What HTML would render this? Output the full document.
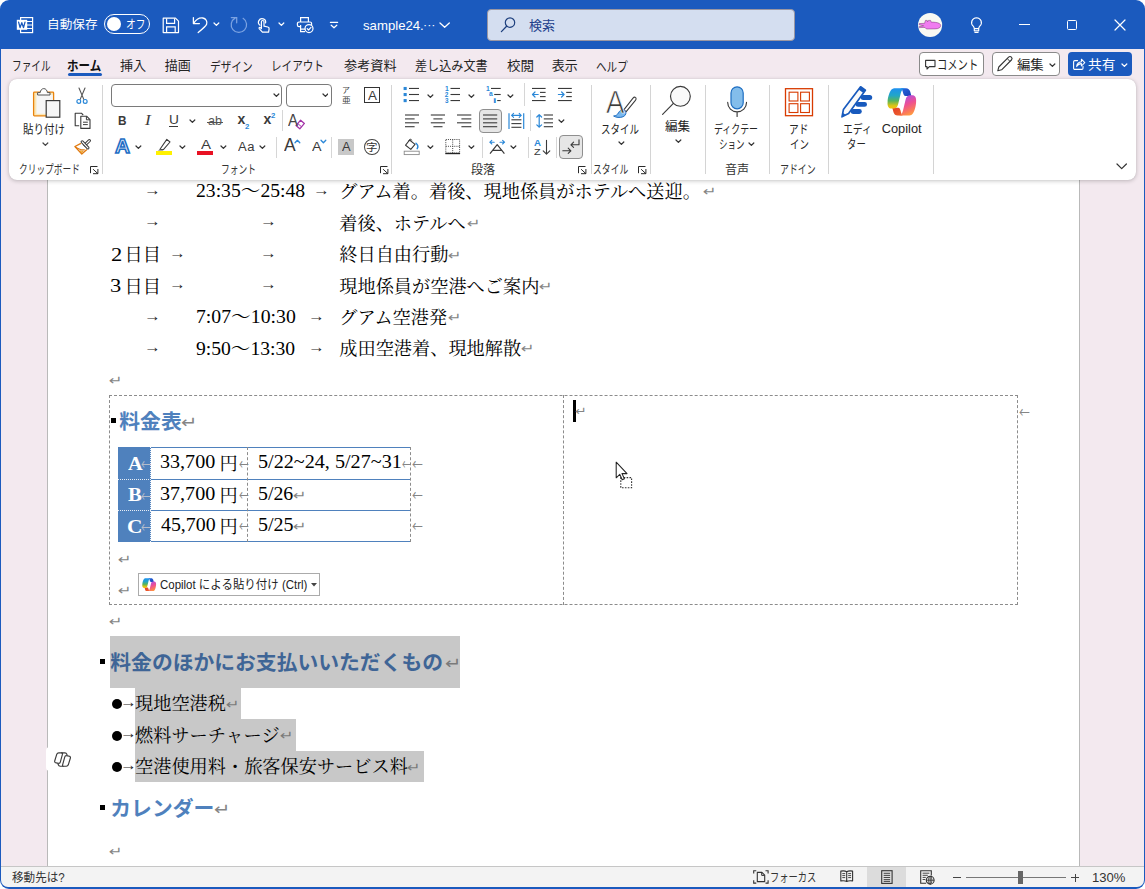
<!DOCTYPE html><html lang="ja"><head><meta charset="utf-8"><title>sample24 - Word</title><style>

html,body{margin:0;padding:0;background:#fff;}
body{width:1145px;height:889px;overflow:hidden;position:relative;font-family:"Liberation Sans","Noto Sans CJK JP",sans-serif;}
#app div,#app svg,#app span.t{position:absolute;}
#app{position:absolute;left:0;top:0;width:1145px;height:889px;overflow:hidden;}
span.t{white-space:pre;transform-origin:0 50%;display:block;}
b.bl{display:inline-block;width:0;height:0;vertical-align:baseline;}

</style></head><body><div id="app">
<div style="left:0px;top:0px;width:1145px;height:889px;background:#1B5ABE;border-radius:9px 9px 9px 9px;"></div>
<div style="left:1px;top:48.5px;width:1143px;height:818.5px;background:#F3E9EF;"></div>
<div style="left:47px;top:170px;width:1033px;height:697px;background:#fff;border-left:1px solid #b9b9b9;border-right:1px solid #b9b9b9;box-sizing:border-box;"></div>
<div style="left:1px;top:866px;width:1143px;height:21px;background:#F3F3F3;border-top:1px solid #C6C6C6;box-sizing:border-box;border-radius:0 0 7px 7px;"></div>
<div style="left:9px;top:79px;width:1127px;height:101px;background:#fff;border-radius:8px;box-shadow:0 1px 4px rgba(0,0,0,0.22),0 0 1px rgba(0,0,0,0.15);"></div>
<div style="left:103.9px;top:13.7px;width:46.2px;height:20.5px;border:1.3px solid #fff;border-radius:10.3px;box-sizing:border-box;"></div>
<div style="left:107px;top:17px;width:14px;height:14px;background:#fff;border-radius:50%;"></div>
<div style="left:487px;top:9px;width:308px;height:31.8px;background:#D4DEF0;border-radius:4px;border:1px solid #9a97a3;box-sizing:border-box;"></div>
<div style="left:68px;top:73px;width:33.5px;height:3px;background:#1B5ABE;border-radius:1.5px;"></div>
<div style="left:919px;top:52px;width:64.5px;height:23.5px;background:#fff;border:1px solid #8a8a8a;border-radius:4px;box-sizing:border-box;"></div>
<div style="left:992px;top:52px;width:68px;height:23.5px;background:#fff;border:1px solid #8a8a8a;border-radius:4px;box-sizing:border-box;"></div>
<div style="left:1068px;top:52px;width:64px;height:23.5px;background:#1B5ABE;border-radius:4px;"></div>
<div style="left:101.5px;top:84.5px;width:1px;height:89px;background:#d4d4d4;"></div>
<div style="left:391px;top:84.5px;width:1px;height:89px;background:#d4d4d4;"></div>
<div style="left:590.8px;top:84.5px;width:1px;height:89px;background:#d4d4d4;"></div>
<div style="left:649.7px;top:84.5px;width:1px;height:89px;background:#d4d4d4;"></div>
<div style="left:704.7px;top:84.5px;width:1px;height:89px;background:#d4d4d4;"></div>
<div style="left:769.4px;top:84.5px;width:1px;height:89px;background:#d4d4d4;"></div>
<div style="left:827.5px;top:84.5px;width:1px;height:89px;background:#d4d4d4;"></div>
<div style="left:932.7px;top:84.5px;width:1px;height:89px;background:#d4d4d4;"></div>
<div style="left:281.5px;top:110px;width:1px;height:21px;background:#d6d6d6;"></div>
<div style="left:276px;top:137px;width:1px;height:21px;background:#d6d6d6;"></div>
<div style="left:331px;top:137px;width:1px;height:21px;background:#d6d6d6;"></div>
<div style="left:524.4px;top:83px;width:1px;height:23px;background:#d6d6d6;"></div>
<div style="left:530px;top:110px;width:1px;height:21px;background:#d6d6d6;"></div>
<div style="left:482px;top:137px;width:1px;height:21px;background:#d6d6d6;"></div>
<div style="left:527.5px;top:137px;width:1px;height:21px;background:#d6d6d6;"></div>
<div style="left:556px;top:137px;width:1px;height:21px;background:#d6d6d6;"></div>
<div style="left:110.5px;top:83.5px;width:171.5px;height:23px;background:#fff;border:1px solid #7a7a7a;border-radius:4px;box-sizing:border-box;"></div>
<div style="left:285.5px;top:83.5px;width:46px;height:23px;background:#fff;border:1px solid #7a7a7a;border-radius:4px;box-sizing:border-box;"></div>
<div style="left:478.5px;top:109px;width:23px;height:23.5px;background:#e6e6e6;border:1px solid #8f8f8f;border-radius:4px;box-sizing:border-box;"></div>
<div style="left:558.7px;top:135px;width:24px;height:24px;background:#e6e6e6;border:1px solid #8f8f8f;border-radius:4px;box-sizing:border-box;"></div>
<div style="left:867px;top:867px;width:38.5px;height:20px;background:#dcdcdc;"></div>
<div style="left:966px;top:877px;width:99.5px;height:1px;background:#777;"></div>
<div style="left:1018px;top:870.5px;width:5px;height:13px;background:#666;"></div>
<div style="left:953px;top:877px;width:8px;height:1px;background:#444;"></div>
<div style="left:1071px;top:877px;width:8px;height:1px;background:#444;"></div>
<div style="left:1074.5px;top:873.5px;width:1px;height:8px;background:#444;"></div>
<div style="left:109px;top:395px;width:909px;height:210px;border:1px dashed #8c8c8c;box-sizing:border-box;"></div>
<div style="left:563px;top:395px;width:1px;height:210px;border-left:1px dashed #8c8c8c;"></div>
<div style="left:111px;top:418px;width:5px;height:5px;background:#000;"></div>
<div style="left:118px;top:447px;width:33px;height:94.5px;background:#4F81BD;"></div>
<div style="left:118px;top:447px;width:293px;height:1px;background:#4F81BD;"></div>
<div style="left:118px;top:479px;width:293px;height:1px;background:#4F81BD;"></div>
<div style="left:118px;top:510.3px;width:293px;height:1px;background:#4F81BD;"></div>
<div style="left:118px;top:541px;width:293px;height:1px;background:#4F81BD;"></div>
<div style="left:247px;top:447px;width:1px;height:95px;border-left:1px dashed #8c8c8c;"></div>
<div style="left:410px;top:447px;width:1px;height:95px;border-left:1px dashed #8c8c8c;"></div>
<div style="left:150px;top:447px;width:1px;height:95px;border-left:1px dotted #e8eef6;"></div>
<div style="left:118px;top:479px;width:33px;height:1px;border-top:1px dotted #e8eef6;"></div>
<div style="left:118px;top:510.3px;width:33px;height:1px;border-top:1px dotted #e8eef6;"></div>
<div style="left:138px;top:573px;width:182px;height:23px;background:#fff;border:1px solid #ababab;box-sizing:border-box;"></div>
<svg style="left:311px;top:583px;" width="6" height="4" viewBox="0 0 6 4" fill="none"><path d="M0 0h6l-3 3.5z" fill="#444"/></svg>
<div style="left:573px;top:400px;width:3px;height:22px;background:#000;"></div>
<div style="left:110px;top:636px;width:350px;height:51.7px;background:#C8C8C8;"></div>
<div style="left:135px;top:687.7px;width:105.7px;height:31.3px;background:#C8C8C8;"></div>
<div style="left:135px;top:719px;width:161px;height:32px;background:#C8C8C8;"></div>
<div style="left:135px;top:751px;width:289px;height:30.7px;background:#C8C8C8;"></div>
<div style="left:100px;top:659px;width:5px;height:5px;background:#000;"></div>
<div style="left:112px;top:699.3px;width:10px;height:10px;background:#000;border-radius:50%;"></div>
<div style="left:112px;top:730.8px;width:10px;height:10px;background:#000;border-radius:50%;"></div>
<div style="left:112px;top:762.3px;width:10px;height:10px;background:#000;border-radius:50%;"></div>
<div style="left:100px;top:805px;width:5px;height:5px;background:#000;"></div>
<div style="left:45.8px;top:746.5px;width:30px;height:24.8px;background:#fff;border-radius:4px;"></div>
<svg style="left:16px;top:16px;" width="18" height="18" viewBox="0 0 18 18" fill="none"><rect x="4.6" y="1.6" width="12" height="15" stroke="#fff" stroke-width="1.2"/>
<path d="M11 5.5h5.5M11 9h5.5M11 12.5h5.5" stroke="#fff" stroke-width="1.1"/>
<rect x="0.8" y="3.8" width="10.4" height="10" fill="#fff"/>
<path d="M2.6 6.2l1.5 5.4 1.7-5 1.7 5 1.5-5.4" stroke="#1B5ABE" stroke-width="1.3" stroke-linejoin="round" stroke-linecap="round"/></svg>
<svg style="left:162px;top:17px;" width="18" height="17" viewBox="0 0 18 17" fill="none"><path d="M1.2 1.2h12.3l3 3v11.4H1.2z" stroke="#fff" stroke-width="1.2" stroke-linejoin="round"/>
<path d="M4.6 1.4v5h8v-5" stroke="#fff" stroke-width="1.2"/>
<path d="M4.6 15.4v-5.6h8.6v5.6" stroke="#fff" stroke-width="1.2"/></svg>
<svg style="left:192px;top:16px;" width="17" height="18" viewBox="0 0 17 18" fill="none"><path d="M1.4 1.6v6h6" stroke="#fff" stroke-width="1.3" stroke-linecap="round" stroke-linejoin="round"/>
<path d="M1.8 7.2C4 3.6 7.6 1.6 10.8 2c3.2.5 4.7 3.4 3.8 6.2-.6 1.8-2 3-8.4 8.3" stroke="#fff" stroke-width="1.3" stroke-linecap="round"/></svg>
<svg style="left:213.1px;top:22.400000000000002px;" width="6.8" height="4.4" viewBox="0 0 6.8 4.4" fill="none"><path d="M1 1 L3.4 3.4 L5.8 1" stroke="#fff" stroke-width="1.25" stroke-linecap="round" stroke-linejoin="round"/></svg>
<svg style="left:230px;top:16px;" width="18" height="18" viewBox="0 0 18 18" fill="none"><path d="M13.100 2.300A7.700 7.700 0 1 1 5 2.100" stroke="#7CA3E2" stroke-width="1.250" stroke-linecap="round"/>
<path d="M1.300 1.550H6.700V6.800" stroke="#7CA3E2" stroke-width="1.250" stroke-linecap="round" stroke-linejoin="miter"/></svg>
<svg style="left:256px;top:17px;" width="15" height="17" viewBox="0 0 15 17" fill="none"><path d="M4 8.2A3.6 3.6 0 1 1 9.6 6" stroke="#fff" stroke-width="1.2" stroke-linecap="round"/>
<path d="M5.4 11.6V4.8a1.3 1.3 0 0 1 2.6 0v4.4l3.8.8c.9.2 1.4.9 1.3 1.8l-.5 3.4H6.4L3.2 11.600c-.5-.8.6-1.600 1.300-.8z" stroke="#fff" stroke-width="1.2" stroke-linejoin="round"/></svg>
<svg style="left:278.0px;top:22.400000000000002px;" width="6.8" height="4.4" viewBox="0 0 6.8 4.4" fill="none"><path d="M1 1 L3.4 3.4 L5.8 1" stroke="#fff" stroke-width="1.25" stroke-linecap="round" stroke-linejoin="round"/></svg>
<svg style="left:296px;top:16px;" width="19" height="18" viewBox="0 0 19 18" fill="none"><path d="M4.6 6V1.600h7.800V6" stroke="#fff" stroke-width="1.2"/>
<path d="M9 13.2H4.600M4.6 10.600H3.000a1.6 1.600 0 0 1-1.600-1.600V7.600a1.6 1.600 0 0 1 1.600-1.600h11a1.600 1.600 0 0 1 1.600 1.600v1" stroke="#fff" stroke-width="1.2" stroke-linecap="round"/>
<path d="M4.6 9.000v6.600h4.4" stroke="#fff" stroke-width="1.2"/>
<circle cx="13" cy="12.600" r="4" stroke="#fff" stroke-width="1.2"/>
<path d="M11.2 12.600l1.400 1.400 2.400-2.600" stroke="#fff" stroke-width="1.200" stroke-linecap="round" stroke-linejoin="round"/></svg>
<svg style="left:329px;top:20px;" width="10" height="10" viewBox="0 0 10 10" fill="none"><path d="M1.400 2.400h7.200" stroke="#fff" stroke-width="1.2" stroke-linecap="round"/>
<path d="M2.200 5.200L5 7.800 7.800 5.200" stroke="#fff" stroke-width="1.2" stroke-linecap="round" stroke-linejoin="round"/></svg>
<svg style="left:438.85px;top:22.35px;" width="11.3" height="6.3" viewBox="0 0 11.3 6.3" fill="none"><path d="M1 1 L5.65 5.3 L10.3 1" stroke="#fff" stroke-width="1.3" stroke-linecap="round" stroke-linejoin="round"/></svg>
<svg style="left:500px;top:16px;" width="17" height="17" viewBox="0 0 17 17" fill="none"><circle cx="10" cy="6.600" r="4.700" stroke="#1d3f7d" stroke-width="1.2"/><path d="M6.600 10.200L1.400 15.600" stroke="#1d3f7d" stroke-width="1.300" stroke-linecap="round"/></svg>
<svg style="left:917px;top:12px;" width="26" height="26" viewBox="0 0 26 26" fill="none"><circle cx="13.100" cy="12.950" r="12.050" fill="#F8F9F3"/>
<path d="M2.200 11.600L7.600 11.300 8.400 8.400h1.800l.4 1.400.8-1.400h2.200l.6 1.700c2.800 0 6.300.300 8.200 1.400 1.600 1 1.600 3.200.2 4.200-1.200.900-3 1.200-4.600 1.200L9.400 17 8 15.400l-5.600.200-.2-1 4.400-.800-4.400-1z" fill="#F07CF0" stroke="#6a2a66" stroke-width="0.450" stroke-linejoin="round"/></svg>
<svg style="left:969px;top:16px;" width="15" height="18" viewBox="0 0 15 18" fill="none"><path d="M7.500 1.700a4.900 4.900 0 0 0-3.300 8.500c.7.700 1 1.400 1.100 2.400h4.400c.1-1 .4-1.700 1.100-2.400A4.900 4.900 0 0 0 7.500 1.700zM5.300 12.600v2.200h4.400v-2.200" stroke="#fff" stroke-width="1.150" stroke-linejoin="round"/>
<path d="M5.900 16.500h3.200" stroke="#fff" stroke-width="1.150" stroke-linecap="round"/></svg>
<div style="left:1019px;top:24px;width:10.5px;height:1.2px;background:#fff;"></div>
<div style="left:1067px;top:20px;width:10px;height:10px;border:1.2px solid #fff;box-sizing:border-box;border-radius:1.5px;"></div>
<svg style="left:1114px;top:19px;" width="12" height="12" viewBox="0 0 12 12" fill="none"><path d="M1 1l10 10M11 1L1 11" stroke="#fff" stroke-width="1.200" stroke-linecap="round"/></svg>
<svg style="left:924px;top:58.5px;" width="13" height="12" viewBox="0 0 13 12" fill="none"><path d="M1.6 1.4h9.400v6.200H5.400L3.000 10V7.600H1.600z" stroke="#333" stroke-width="1.1" stroke-linejoin="round"/></svg>
<svg style="left:996px;top:55px;" width="18" height="18" viewBox="0 0 18 18" fill="none"><path d="M12.600 2.200a1.900 1.900 0 0 1 2.800 2.800L5.600 14.800l-3.800 1 1-3.800z" stroke="#333" stroke-width="1.1" stroke-linejoin="round"/><path d="M11.200 3.600l2.800 2.800" stroke="#333" stroke-width="1"/></svg>
<svg style="left:1049.1px;top:62.599999999999994px;" width="6.8" height="4.4" viewBox="0 0 6.8 4.4" fill="none"><path d="M1 1 L3.4 3.4 L5.8 1" stroke="#333" stroke-width="1.25" stroke-linecap="round" stroke-linejoin="round"/></svg>
<svg style="left:1072px;top:57px;" width="14" height="14" viewBox="0 0 14 14" fill="none"><path d="M5.600 3.600H2.800a1.200 1.200 0 0 0-1.200 1.200v6.400a1.200 1.200 0 0 0 1.200 1.200h7a1.200 1.200 0 0 0 1.200-1.200V9.400" stroke="#fff" stroke-width="1.1" stroke-linecap="round"/><path d="M4.600 9.600c.4-3 2.200-4.600 4.800-4.800V2.200l3.400 3.400-3.400 3.400V6.600c-2 0-3.600.800-4.800 3z" stroke="#fff" stroke-width="1.050" stroke-linejoin="round"/></svg>
<svg style="left:1121.1px;top:62.599999999999994px;" width="6.8" height="4.4" viewBox="0 0 6.8 4.4" fill="none"><path d="M1 1 L3.4 3.4 L5.8 1" stroke="#fff" stroke-width="1.25" stroke-linecap="round" stroke-linejoin="round"/></svg>
<svg style="left:32px;top:87px;" width="30" height="32" viewBox="0 0 30 32" fill="none"><rect x="1.600" y="5.200" width="20" height="23.600" rx="0.800" fill="#FBE6B4" stroke="#E8820C" stroke-width="1.300"/>
<rect x="4.400" y="7.600" width="16.400" height="19.200" fill="#F6F6F6"/>
<path d="M5.600 8V5.600h2.600c.2-2.200 1.600-4 3.600-4s3.400 1.800 3.600 4h2.600V8z" fill="#fff" stroke="#555" stroke-width="1"/>
<rect x="14.200" y="13.600" width="13.600" height="16.600" fill="#F6F6F6" stroke="#3a3a3a" stroke-width="1.200"/></svg>
<svg style="left:42.1px;top:142.20000000000002px;" width="6.8" height="4.4" viewBox="0 0 6.8 4.4" fill="none"><path d="M1 1 L3.4 3.4 L5.8 1" stroke="#444" stroke-width="1.25" stroke-linecap="round" stroke-linejoin="round"/></svg>
<svg style="left:76px;top:86.5px;" width="12" height="17.5" viewBox="0 0 12 17.5" fill="none"><path d="M3.000 1l4.800 11.400M9.000 1L4.200 12.400" stroke="#555" stroke-width="1.100" stroke-linecap="round"/>
<circle cx="2.800" cy="14.400" r="1.900" stroke="#2B88D8" stroke-width="1.200"/><circle cx="9.200" cy="14.400" r="1.900" stroke="#2B88D8" stroke-width="1.200"/></svg>
<svg style="left:73.5px;top:112px;" width="17.5" height="17.5" viewBox="0 0 17.5 17.5" fill="none"><path d="M5.200 13.800H1.200V1.200h6.200l1.800 1.800" stroke="#3a3a3a" stroke-width="1.100" stroke-linejoin="round"/>
<path d="M6.800 4.200h5.800l3.400 3.400v8.800H6.800z" fill="#fff" stroke="#3a3a3a" stroke-width="1.100" stroke-linejoin="round"/>
<path d="M12.400 4.400v3.400h3.400M9.000 10.200h4.800M9.000 12.600h4.800" stroke="#3a3a3a" stroke-width="1"/></svg>
<svg style="left:73.5px;top:137.5px;" width="17.5" height="17.5" viewBox="0 0 17.5 17.5" fill="none"><path d="M6.900 5.400L.900 8.500l6.900 7.600 5.100-4.500" fill="#fff" stroke="#E07A10" stroke-width="1.300" stroke-linejoin="round"/>
<path d="M1.200 8.600c2.600 2.400 6 3.400 9.600 3.200" stroke="#E07A10" stroke-width="1.100"/>
<path d="M5.800 12.700l3.400.300-1.700 2z" fill="#F8D34A" stroke="#E07A10" stroke-width="0.600"/>
<path d="M11 6.900L15.300 2.700" stroke="#3a3a3a" stroke-width="3.200" stroke-linecap="round"/><path d="M11 6.900L15.300 2.700" stroke="#fff" stroke-width="1.200" stroke-linecap="round"/>
<path d="M8.200 3.900l5.700 6" stroke="#3a3a3a" stroke-width="3.200" stroke-linecap="round"/><path d="M8.200 3.900l5.700 6" stroke="#fff" stroke-width="1.200" stroke-linecap="round"/></svg>
<svg style="left:89.7px;top:165.8px;" width="9" height="9" viewBox="0 0 9 9" fill="none"><path d="M0.500 6.800V0.500H7.100M3.400 3.500L7.700 7.500M7.900 3.400V7.700H3.400" stroke="#2a2a2a" stroke-width="1" stroke-linecap="round" stroke-linejoin="round"/></svg>
<svg style="left:379.7px;top:165.8px;" width="9" height="9" viewBox="0 0 9 9" fill="none"><path d="M0.500 6.800V0.500H7.100M3.400 3.500L7.700 7.500M7.900 3.400V7.700H3.400" stroke="#2a2a2a" stroke-width="1" stroke-linecap="round" stroke-linejoin="round"/></svg>
<svg style="left:578.4px;top:165.8px;" width="9" height="9" viewBox="0 0 9 9" fill="none"><path d="M0.500 6.800V0.500H7.100M3.400 3.500L7.700 7.500M7.900 3.400V7.700H3.400" stroke="#2a2a2a" stroke-width="1" stroke-linecap="round" stroke-linejoin="round"/></svg>
<svg style="left:637.8px;top:165.8px;" width="9" height="9" viewBox="0 0 9 9" fill="none"><path d="M0.500 6.800V0.500H7.100M3.400 3.500L7.700 7.500M7.900 3.400V7.700H3.400" stroke="#2a2a2a" stroke-width="1" stroke-linecap="round" stroke-linejoin="round"/></svg>
<svg style="left:273.1px;top:93.3px;" width="6.8" height="4.4" viewBox="0 0 6.8 4.4" fill="none"><path d="M1 1 L3.4 3.4 L5.8 1" stroke="#333" stroke-width="1.25" stroke-linecap="round" stroke-linejoin="round"/></svg>
<svg style="left:321.6px;top:93.3px;" width="6.8" height="4.4" viewBox="0 0 6.8 4.4" fill="none"><path d="M1 1 L3.4 3.4 L5.8 1" stroke="#333" stroke-width="1.25" stroke-linecap="round" stroke-linejoin="round"/></svg>
<div style="left:364px;top:87.2px;width:16px;height:15.6px;border:1.1px solid #333;box-sizing:border-box;"></div>
<div style="left:169px;top:125.6px;width:9px;height:1.1px;background:#3a3a3a;"></div>
<svg style="left:189.0px;top:119.39999999999999px;" width="6.8" height="4.4" viewBox="0 0 6.8 4.4" fill="none"><path d="M1 1 L3.4 3.4 L5.8 1" stroke="#333" stroke-width="1.25" stroke-linecap="round" stroke-linejoin="round"/></svg>
<div style="left:207px;top:121.7px;width:16px;height:1px;background:#555;"></div>
<svg style="left:293.5px;top:118.5px;" width="12" height="12" viewBox="0 0 12 12" fill="none"><path d="M6.600 1.200l3.800 3.200-4.600 5.400-3.800-3.200z" fill="#fff" stroke="#A333A8" stroke-width="1.300" stroke-linejoin="round"/><path d="M3.800 4.600l3.800 3.200" stroke="#A333A8" stroke-width="1"/></svg>
<svg style="left:135.29999999999998px;top:145.0px;" width="6.8" height="4.4" viewBox="0 0 6.8 4.4" fill="none"><path d="M1 1 L3.4 3.4 L5.8 1" stroke="#333" stroke-width="1.25" stroke-linecap="round" stroke-linejoin="round"/></svg>
<svg style="left:156px;top:138px;" width="17" height="18" viewBox="0 0 17 18" fill="none"><rect x="0" y="13" width="16" height="4" fill="#FFF100"/>
<path d="M10.800 1.400l3.200 2.600-6.600 7.600-3.400-.4z" stroke="#3a3a3a" stroke-width="1.050" stroke-linejoin="round" fill="#fff"/>
<path d="M4.200 11.200l-2.400 1.300 5 .100.800-1.200z" fill="#555"/></svg>
<svg style="left:179.4px;top:145.0px;" width="6.8" height="4.4" viewBox="0 0 6.8 4.4" fill="none"><path d="M1 1 L3.4 3.4 L5.8 1" stroke="#333" stroke-width="1.25" stroke-linecap="round" stroke-linejoin="round"/></svg>
<div style="left:197px;top:151px;width:16px;height:4px;background:#E81123;"></div>
<svg style="left:219.79999999999998px;top:145.0px;" width="6.8" height="4.4" viewBox="0 0 6.8 4.4" fill="none"><path d="M1 1 L3.4 3.4 L5.8 1" stroke="#333" stroke-width="1.25" stroke-linecap="round" stroke-linejoin="round"/></svg>
<svg style="left:258.8px;top:145.4px;" width="6.8" height="4.4" viewBox="0 0 6.8 4.4" fill="none"><path d="M1 1 L3.4 3.4 L5.8 1" stroke="#333" stroke-width="1.25" stroke-linecap="round" stroke-linejoin="round"/></svg>
<svg style="left:293.5px;top:139.4px;" width="7" height="5" viewBox="0 0 7 5" fill="none"><path d="M1 3.800L3.400 1.200 5.800 3.800" stroke="#2B88D8" stroke-width="1.300" stroke-linecap="round" stroke-linejoin="round"/></svg>
<svg style="left:319.5px;top:139.4px;" width="7" height="5" viewBox="0 0 7 5" fill="none"><path d="M1 1.200L3.400 3.800 5.800 1.200" stroke="#2B88D8" stroke-width="1.300" stroke-linecap="round" stroke-linejoin="round"/></svg>
<div style="left:338px;top:138.8px;width:16px;height:16.3px;background:#C8C8C8;"></div>
<div style="left:364px;top:138.8px;width:16px;height:16.3px;border:1.100px solid #444;border-radius:50%;box-sizing:border-box;"></div>
<svg style="left:395px;top:80px;" width="200" height="80" viewBox="0 0 200 80" fill="none"><rect x="8.60" y="6.95" width="3.100" height="3.100" fill="#2B88D8"/><path d="M14.00 8.45H24.00" stroke="#3a3a3a" stroke-width="1.1"/><rect x="8.60" y="13.00" width="3.100" height="3.100" fill="#2B88D8"/><path d="M14.00 14.50H24.00" stroke="#3a3a3a" stroke-width="1.1"/><rect x="8.60" y="19.05" width="3.100" height="3.100" fill="#2B88D8"/><path d="M14.00 20.55H24.00" stroke="#3a3a3a" stroke-width="1.1"/><path d="M55.50 8.45H65.00" stroke="#3a3a3a" stroke-width="1.1"/><path d="M55.50 14.50H65.00" stroke="#3a3a3a" stroke-width="1.1"/><path d="M55.50 20.55H65.00" stroke="#3a3a3a" stroke-width="1.1"/><path d="M96.00 8.45H105.70" stroke="#3a3a3a" stroke-width="1.1"/><path d="M99.20 14.50H105.70" stroke="#3a3a3a" stroke-width="1.1"/><path d="M102.20 20.55H105.70" stroke="#3a3a3a" stroke-width="1.1"/><path d="M137.00 8.45H150.60" stroke="#3a3a3a" stroke-width="1.1"/><path d="M145.00 12.40H150.60" stroke="#3a3a3a" stroke-width="1.1"/><path d="M145.00 16.60H150.60" stroke="#3a3a3a" stroke-width="1.1"/><path d="M137.00 20.55H150.60" stroke="#3a3a3a" stroke-width="1.1"/><path d="M143.20000000000005 14.5H137.60000000000002M140 12l-2.500 2.500 2.500 2.500" stroke="#2B88D8" stroke-width="1.200" stroke-linecap="round" stroke-linejoin="round"/><path d="M163.00 8.45H176.80" stroke="#3a3a3a" stroke-width="1.1"/><path d="M171.20 12.40H176.80" stroke="#3a3a3a" stroke-width="1.1"/><path d="M171.20 16.60H176.80" stroke="#3a3a3a" stroke-width="1.1"/><path d="M163.00 20.55H176.80" stroke="#3a3a3a" stroke-width="1.1"/><path d="M163.39999999999998 14.5H169M166.60000000000002 12l2.500 2.500-2.500 2.500" stroke="#2B88D8" stroke-width="1.200" stroke-linecap="round" stroke-linejoin="round"/><path d="M10.00 35.00H24.00" stroke="#3a3a3a" stroke-width="1.1"/><path d="M35.80 35.00H50.00" stroke="#3a3a3a" stroke-width="1.1"/><path d="M62.00 35.00H76.30" stroke="#3a3a3a" stroke-width="1.1"/><path d="M88.00 35.00H102.20" stroke="#3a3a3a" stroke-width="1.1"/><path d="M148.80 35.00H158.00" stroke="#3a3a3a" stroke-width="1.1"/><path d="M10.00 38.90H19.60" stroke="#3a3a3a" stroke-width="1.1"/><path d="M38.40 38.90H47.50" stroke="#3a3a3a" stroke-width="1.1"/><path d="M66.40 38.90H76.30" stroke="#3a3a3a" stroke-width="1.1"/><path d="M88.00 38.90H102.20" stroke="#3a3a3a" stroke-width="1.1"/><path d="M148.80 38.90H158.00" stroke="#3a3a3a" stroke-width="1.1"/><path d="M10.00 42.80H24.00" stroke="#3a3a3a" stroke-width="1.1"/><path d="M35.80 42.80H50.00" stroke="#3a3a3a" stroke-width="1.1"/><path d="M62.00 42.80H76.30" stroke="#3a3a3a" stroke-width="1.1"/><path d="M88.00 42.80H102.20" stroke="#3a3a3a" stroke-width="1.1"/><path d="M148.80 42.80H158.00" stroke="#3a3a3a" stroke-width="1.1"/><path d="M10.00 46.70H19.60" stroke="#3a3a3a" stroke-width="1.1"/><path d="M38.40 46.70H47.50" stroke="#3a3a3a" stroke-width="1.1"/><path d="M66.40 46.70H76.30" stroke="#3a3a3a" stroke-width="1.1"/><path d="M88.00 46.70H102.20" stroke="#3a3a3a" stroke-width="1.1"/><path d="M148.80 46.70H158.00" stroke="#3a3a3a" stroke-width="1.1"/><path d="M114 33.2V49M128.70000000000005 33.2V49" stroke="#2B88D8" stroke-width="1.200"/><path d="M116.60000000000002 35.400000000000006H126.20000000000005M118.60000000000002 33.400000000000006l-2 2 2 2M124.20000000000005 33.400000000000006l2 2-2 2" stroke="#2B88D8" stroke-width="1.100" stroke-linecap="round" stroke-linejoin="round"/><path d="M116.40 39.80H126.40" stroke="#3a3a3a" stroke-width="1.1"/><path d="M116.40 43.60H126.40" stroke="#3a3a3a" stroke-width="1.1"/><path d="M116.40 47.30H126.40" stroke="#3a3a3a" stroke-width="1.1"/><path d="M144.20000000000005 34.599999999999994V47.2M141.79999999999995 37l2.400-2.400 2.400 2.400M141.79999999999995 44.8l2.400 2.400 2.400-2.400" stroke="#2B88D8" stroke-width="1.200" stroke-linecap="round" stroke-linejoin="round"/><rect x="9.199999999999989" y="71.19999999999999" width="15" height="3.400" fill="#fff" stroke="#8a8a8a" stroke-width="0.900"/><path d="M14.600000000000023 60l5.400 4.400-4.200 5-5.200-4.200z" stroke="#3a3a3a" stroke-width="1.100" stroke-linejoin="round" fill="#fff"/><path d="M13.800000000000011 61.400000000000006c0-2.400 2.600-2.800 3-1" stroke="#3a3a3a" stroke-width="1"/><path d="M21 63.19999999999999c1.800 1.600 2.200 3.800 1.200 5.400" stroke="#2B88D8" stroke-width="1.500" stroke-linecap="round"/><rect x="50.80000000000001" y="59.5" width="13.800" height="13.600" stroke="#444" stroke-width="1" stroke-dasharray="1 1.130"/><path d="M57.69999999999999 59.5v13.600M50.80000000000001 66.30000000000001h13.800" stroke="#444" stroke-width="1" stroke-dasharray="1 1.130"/><path d="M50.30000000000001 73.5h14.800" stroke="#222" stroke-width="1.400"/><path d="M95 73.6L102.19999999999999 64.6L109.39999999999998 73.6M97.60000000000002 70.4H106.80000000000001" stroke="#3a3a3a" stroke-width="1.200" stroke-linejoin="round"/><path d="M99.19999999999999 62.19999999999999H94.80000000000001M96.80000000000001 60.400000000000006l-1.900 1.800 1.900 1.800M105 62.19999999999999H109.60000000000002M107.60000000000002 60.400000000000006l1.900 1.800-1.900 1.800" stroke="#2B88D8" stroke-width="1.100" stroke-linecap="round" stroke-linejoin="round"/><path d="M151.5 60.19999999999999V74M148.20000000000005 70.80000000000001l3.300 3.300 3.300-3.300" stroke="#3a3a3a" stroke-width="1.100" stroke-linecap="round" stroke-linejoin="round"/><path d="M184 59.80000000000001v5h-8M178.60000000000002 62.19999999999999l-2.700 2.600 2.700 2.600" stroke="#3a3a3a" stroke-width="1.100" stroke-linecap="round" stroke-linejoin="round"/><path d="M167.79999999999995 70.80000000000001h8M173.20000000000005 68.19999999999999l2.700 2.600-2.700 2.600" stroke="#3a3a3a" stroke-width="1.100" stroke-linecap="round" stroke-linejoin="round"/></svg>
<svg style="left:426.90000000000003px;top:93.6px;" width="6.8" height="4.4" viewBox="0 0 6.8 4.4" fill="none"><path d="M1 1 L3.4 3.4 L5.8 1" stroke="#333" stroke-width="1.25" stroke-linecap="round" stroke-linejoin="round"/></svg>
<svg style="left:468.0px;top:93.6px;" width="6.8" height="4.4" viewBox="0 0 6.8 4.4" fill="none"><path d="M1 1 L3.4 3.4 L5.8 1" stroke="#333" stroke-width="1.25" stroke-linecap="round" stroke-linejoin="round"/></svg>
<svg style="left:506.8px;top:93.6px;" width="6.8" height="4.4" viewBox="0 0 6.8 4.4" fill="none"><path d="M1 1 L3.4 3.4 L5.8 1" stroke="#333" stroke-width="1.25" stroke-linecap="round" stroke-linejoin="round"/></svg>
<svg style="left:558.1px;top:119.39999999999999px;" width="6.8" height="4.4" viewBox="0 0 6.8 4.4" fill="none"><path d="M1 1 L3.4 3.4 L5.8 1" stroke="#333" stroke-width="1.25" stroke-linecap="round" stroke-linejoin="round"/></svg>
<svg style="left:426.90000000000003px;top:145.4px;" width="6.8" height="4.4" viewBox="0 0 6.8 4.4" fill="none"><path d="M1 1 L3.4 3.4 L5.8 1" stroke="#333" stroke-width="1.25" stroke-linecap="round" stroke-linejoin="round"/></svg>
<svg style="left:468.0px;top:145.4px;" width="6.8" height="4.4" viewBox="0 0 6.8 4.4" fill="none"><path d="M1 1 L3.4 3.4 L5.8 1" stroke="#333" stroke-width="1.25" stroke-linecap="round" stroke-linejoin="round"/></svg>
<svg style="left:509.9px;top:145.4px;" width="6.8" height="4.4" viewBox="0 0 6.8 4.4" fill="none"><path d="M1 1 L3.4 3.4 L5.8 1" stroke="#333" stroke-width="1.25" stroke-linecap="round" stroke-linejoin="round"/></svg>
<svg style="left:610px;top:94px;" width="28" height="26" viewBox="0 0 28 26" fill="none"><path d="M25.400 3.400c1 .7.800 1.900 0 3L16.200 17.600l-2.400-1.800L23 4.200c.7-.9 1.600-1.400 2.400-.8z" fill="#fff" stroke="#3a3a3a" stroke-width="1.050" stroke-linejoin="round"/>
<path d="M13.600 15.600c1.600.9 2.600 2.400 2.200 4.200-.6 2.600-4 4-7.800 3.600-1.600-.2-3.200-.6-4.400-1.400 2.400-.2 3.800-1.200 4.800-3 1-1.800 2.800-4 5.200-3.400z" fill="#79B7EE" stroke="#1E6EC2" stroke-width="1"/></svg>
<svg style="left:618.1px;top:141.3px;" width="6.8" height="4.4" viewBox="0 0 6.8 4.4" fill="none"><path d="M1 1 L3.4 3.4 L5.8 1" stroke="#333" stroke-width="1.25" stroke-linecap="round" stroke-linejoin="round"/></svg>
<svg style="left:660px;top:84px;" width="34" height="34" viewBox="0 0 34 34" fill="none"><circle cx="20.400" cy="12.300" r="9.900" fill="#FAFAFA" stroke="#3a3a3a" stroke-width="1.150"/><path d="M13.400 19.400L2.600 30.400" stroke="#3a3a3a" stroke-width="1.150" stroke-linecap="round"/></svg>
<svg style="left:674.9px;top:139.10000000000002px;" width="6.8" height="4.4" viewBox="0 0 6.8 4.4" fill="none"><path d="M1 1 L3.4 3.4 L5.8 1" stroke="#333" stroke-width="1.25" stroke-linecap="round" stroke-linejoin="round"/></svg>
<svg style="left:725px;top:85px;" width="24" height="33" viewBox="0 0 24 33" fill="none"><rect x="6" y="1.800" width="12.200" height="22" rx="6.100" fill="#83BDEB" stroke="#1E6EC2" stroke-width="1.200"/>
<path d="M2.700 17.400c0 5.400 4 9.400 9.400 9.400s9.400-4 9.400-9.400M12.100 26.800v4.600" stroke="#3a3a3a" stroke-width="1.150" stroke-linecap="round"/></svg>
<svg style="left:747.9px;top:142.3px;" width="6.8" height="4.4" viewBox="0 0 6.8 4.4" fill="none"><path d="M1 1 L3.4 3.4 L5.8 1" stroke="#333" stroke-width="1.25" stroke-linecap="round" stroke-linejoin="round"/></svg>
<svg style="left:784px;top:87px;" width="30" height="30" viewBox="0 0 30 30" fill="none"><rect x="1.500" y="1.700" width="27" height="27" stroke="#D83B01" stroke-width="1.300"/>
<rect x="5.100" y="5.200" width="8.800" height="8.800" stroke="#D83B01" stroke-width="1.100"/><rect x="16.600" y="5.200" width="8.800" height="8.800" stroke="#D83B01" stroke-width="1.100"/>
<rect x="5.100" y="16.700" width="8.800" height="8.800" stroke="#D83B01" stroke-width="1.100"/><rect x="16.600" y="16.700" width="8.800" height="8.800" stroke="#D83B01" stroke-width="1.100"/></svg>
<svg style="left:840px;top:85px;" width="34" height="34" viewBox="0 0 34 34" fill="none"><rect x="20.800" y="10" width="11.400" height="5" rx="2.500" fill="#185ABD"/><rect x="15.600" y="17" width="11.400" height="4.800" rx="2.400" fill="#185ABD"/><rect x="10.600" y="24.100" width="11.200" height="4.800" rx="2.400" fill="#185ABD"/>
<path d="M20.600 1.800l4.800 3.400L8.600 28.400l-6.600 3.400 1.400-7.200z" fill="#FAFAFA" stroke="#185ABD" stroke-width="1.700" stroke-linejoin="round"/>
<path d="M18.600 4.600l4.800 3.400 2-2.800-4.800-3.400z" fill="#185ABD"/><path d="M2 31.800l.8-4 2.600 2z" fill="#185ABD"/></svg>
<svg style="left:887.3px;top:87.7px;" width="30" height="28" viewBox="0 0 30 28" fill="none"><defs>
<linearGradient id="cpa" x1="0" y1="0" x2="0" y2="1"><stop offset="0" stop-color="#1E90F0"/><stop offset="0.350" stop-color="#21A6C8"/><stop offset="0.620" stop-color="#58B45A"/><stop offset="0.850" stop-color="#D8C416"/><stop offset="1" stop-color="#F6C20E"/></linearGradient>
<linearGradient id="cpb" x1="0.300" y1="0" x2="0.700" y2="1"><stop offset="0" stop-color="#A552EE"/><stop offset="0.450" stop-color="#EE4F93"/><stop offset="0.800" stop-color="#FB7D55"/><stop offset="1" stop-color="#FFA23E"/></linearGradient>
<linearGradient id="cpc" x1="0" y1="0" x2="1" y2="1"><stop offset="0" stop-color="#2A6AE0"/><stop offset="1" stop-color="#1741B8"/></linearGradient>
<linearGradient id="cpd" x1="1" y1="1" x2="0" y2="0"><stop offset="0" stop-color="#F0662C"/><stop offset="1" stop-color="#E23E2A"/></linearGradient>
</defs><path id="cpf" d="M13 .300H19c2.200 0 3.600 1.300 4.200 3.300l1.200 4.500H18.600c-1.800 0-2.200-2.100-2.800-4.100C15.300 2 14.600.300 13 .300z" fill="url(#cpc)"/>
<path d="M16.700 27.600H10.700c-2.200 0-3.600-1.300-4.200-3.300L5.300 19.800h5.800c1.800 0 2.200 2.100 2.800 4.100.5 2 1.200 3.700 2.800 3.700z" fill="url(#cpd)"/>
<path d="M.600 14C.600 10 2.500 3.500 4.500 1.600 5.500.500 7 .300 8.500.300h10c-2.500 0-4 2.200-4.700 4.700L11.200 16c-.7 3-2.200 4.600-4.700 4.600h-2C1.500 20.600.200 18 .600 14z" fill="url(#cpa)"/>
<path d="M29.100 13.900c0 4-1.900 10.500-3.900 12.400-1 1.100-2.500 1.300-4 1.300h-10c2.500 0 4-2.200 4.700-4.700l2.600-11c.7-3 2.200-4.600 4.700-4.600h2c3 0 4.300 2.600 3.900 6.600z" fill="url(#cpb)"/></svg>
<svg style="left:753px;top:869.5px;" width="16" height="14" viewBox="0 0 16 14" fill="none"><path d="M0.700 3.600V0.700h2.600M12.500 .700h2.600v2.900M15.100 10.200v2.900h-2.600M3.300 13.100H.700v-2.900" stroke="#333" stroke-width="1.100"/>
<path d="M4.300 2.400h4.600l2.800 2.800v6.400H4.300z" stroke="#333" stroke-width="1.100" stroke-linejoin="round"/><path d="M8.700 2.600v2.800h2.800" stroke="#333" stroke-width="1"/></svg>
<svg style="left:839.5px;top:870px;" width="14" height="13" viewBox="0 0 14 13" fill="none"><path d="M6.700 1.700C5.400.900 3 .800.800 1.100v9.800c2.200-.3 4.600-.200 5.900.600 1.300-.800 3.700-.900 5.900-.600V1.100C10.400.800 8 .900 6.700 1.700zM6.700 1.700v10.200" stroke="#333" stroke-width="1.100" stroke-linejoin="round"/>
<path d="M2.300 3.600h2.900M2.300 5.600h2.900M2.300 7.600h2.900M8.200 3.600h2.900M8.200 5.600h2.900M8.200 7.600h2.900" stroke="#333" stroke-width="0.900"/></svg>
<svg style="left:880.5px;top:869.5px;" width="12" height="14" viewBox="0 0 12 14" fill="none"><rect x=".700" y=".700" width="10.400" height="12.700" stroke="#333" stroke-width="1.100"/>
<path d="M2.700 3.300h6.400M2.700 5.400h6.400M2.700 7.500h6.400M2.700 9.600h6.400M2.700 11.400h6.400" stroke="#333" stroke-width="0.900"/></svg>
<svg style="left:920px;top:869.5px;" width="15" height="15" viewBox="0 0 15 15" fill="none"><path d="M11.300 5.600V.700H.700v12.600h5.400" stroke="#333" stroke-width="1.100"/>
<path d="M2.600 3.200h6.800M2.600 5.300h5.200M2.600 7.400h3.200M2.600 9.500h2.700" stroke="#333" stroke-width="0.900"/>
<circle cx="10.200" cy="10.200" r="3.900" fill="#F3F3F3" stroke="#333" stroke-width="1.100"/><path d="M6.300 10.200h7.800M10.200 6.300v7.800" stroke="#333" stroke-width="0.900"/><ellipse cx="10.200" cy="10.200" rx="1.700" ry="3.900" stroke="#333" stroke-width="0.800"/></svg>
<svg style="left:142px;top:577.600px" width="14.500" height="13.600" viewBox="0 0 30 28" fill="none"><path id="cpf" d="M13 .300H19c2.200 0 3.600 1.300 4.200 3.300l1.200 4.500H18.600c-1.800 0-2.200-2.100-2.800-4.100C15.300 2 14.600.300 13 .300z" fill="url(#cpc)"/>
<path d="M16.700 27.600H10.700c-2.200 0-3.600-1.300-4.200-3.300L5.300 19.800h5.800c1.800 0 2.200 2.100 2.800 4.100.5 2 1.200 3.700 2.800 3.700z" fill="url(#cpd)"/>
<path d="M.600 14C.600 10 2.500 3.500 4.500 1.600 5.500.500 7 .300 8.500.300h10c-2.500 0-4 2.200-4.700 4.700L11.200 16c-.7 3-2.200 4.600-4.700 4.600h-2C1.500 20.600.200 18 .600 14z" fill="url(#cpa)"/>
<path d="M29.100 13.900c0 4-1.900 10.500-3.900 12.400-1 1.100-2.500 1.300-4 1.300h-10c2.500 0 4-2.200 4.700-4.700l2.600-11c.7-3 2.200-4.600 4.700-4.600h2c3 0 4.300 2.600 3.900 6.600z" fill="url(#cpb)"/></svg>
<svg style="left:53.5px;top:751.5px;" width="18" height="15" viewBox="0 0 18 15" fill="none"><g stroke="#3c3c3c" stroke-width="1.150" stroke-linejoin="round" stroke-linecap="round">
<path d="M7.500 .800H11c.900 0 1.500.500 1.800 1.400l.400 1.300"/><path d="M7.500 .800H11c.900 0 1.500.500 1.800 1.400l.400 1.300" transform="rotate(180 8.550 7.500)"/>
<path d="M4.800 .800H7.500c.800 0 1.200.600 1 1.400L6.300 10.200c-.200.800-.900 1.200-1.700 1.100L2 10.900C1 10.800.500 10 .700 9L2.800 2.200C3.100 1.300 3.800.800 4.800.800z" fill="#fff" transform="rotate(180 8.550 7.500)"/>
<path d="M4.800 .800H7.500c.800 0 1.200.600 1 1.400L6.300 10.200c-.200.800-.900 1.200-1.700 1.100L2 10.900C1 10.800.500 10 .700 9L2.800 2.200C3.100 1.300 3.800.800 4.800.800z" fill="none"/></g></svg>
<svg style="left:615px;top:460.5px;" width="19" height="29" viewBox="0 0 19 29" fill="none"><rect x="5.800" y="16.600" width="10.800" height="10.200" fill="#fff" stroke="#333" stroke-width="1.100" stroke-dasharray="1.600 1.300"/>
<path d="M1.200 1.200v15.600l3.600-3.400 2.400 5.400 2.200-1-2.400-5.200h5z" fill="#fff" stroke="#222" stroke-width="1.050" stroke-linejoin="round"/></svg>
<svg style="left:1115.8px;top:163.0px;" width="11.4" height="6.6" viewBox="0 0 11.4 6.6" fill="none"><path d="M1 1 L5.7 5.6 L10.4 1" stroke="#333" stroke-width="1.2" stroke-linecap="round" stroke-linejoin="round"/></svg>
<span class="t" style='left:46.96px;top:16.06px;font-size:12px;line-height:18px;color:#fff;font-family:"Liberation Sans","Noto Sans CJK JP",sans-serif;transform:scaleX(1.0535);'>自動保存</span>
<span class="t" style='left:126.10px;top:16.03px;font-size:12px;line-height:18px;color:#fff;font-family:"Liberation Sans","Noto Sans CJK JP",sans-serif;transform:scaleX(0.8047);'>オフ</span>
<span class="t" style='left:362.57px;top:16.77px;font-size:12.6px;line-height:19px;color:#fff;font-family:"Liberation Sans","Noto Sans CJK JP",sans-serif;transform:scaleX(1.0460);'>sample24.</span>
<span class="t" style='left:422.90px;top:18.45px;font-size:10px;line-height:15px;color:#fff;font-family:"Liberation Sans","Noto Sans CJK JP",sans-serif;transform:scaleX(1.2431);'>···</span>
<span class="t" style='left:529.02px;top:15.91px;font-size:13px;line-height:20px;color:#21408c;font-family:"Liberation Sans","Noto Sans CJK JP",sans-serif;'>検索</span>
<span class="t" style='left:11.51px;top:56.06px;font-size:13px;line-height:20px;color:#242424;font-family:"Liberation Sans","Noto Sans CJK JP",sans-serif;transform:scaleX(0.7414);'>ファイル</span>
<span class="t" style='left:67.45px;top:56.41px;font-size:13px;line-height:20px;color:#111;font-family:"Liberation Sans","Noto Sans CJK JP",sans-serif;font-weight:700;transform:scaleX(0.8860);'>ホーム</span>
<span class="t" style='left:119.69px;top:56.41px;font-size:13px;line-height:20px;color:#242424;font-family:"Liberation Sans","Noto Sans CJK JP",sans-serif;transform:scaleX(1.0074);'>挿入</span>
<span class="t" style='left:164.69px;top:56.44px;font-size:13px;line-height:20px;color:#242424;font-family:"Liberation Sans","Noto Sans CJK JP",sans-serif;'>描画</span>
<span class="t" style='left:210.13px;top:56.62px;font-size:13px;line-height:20px;color:#242424;font-family:"Liberation Sans","Noto Sans CJK JP",sans-serif;transform:scaleX(0.8210);'>デザイン</span>
<span class="t" style='left:270.66px;top:56.47px;font-size:13px;line-height:20px;color:#242424;font-family:"Liberation Sans","Noto Sans CJK JP",sans-serif;transform:scaleX(0.8141);'>レイアウト</span>
<span class="t" style='left:343.81px;top:56.41px;font-size:13px;line-height:20px;color:#242424;font-family:"Liberation Sans","Noto Sans CJK JP",sans-serif;transform:scaleX(1.0122);'>参考資料</span>
<span class="t" style='left:415.03px;top:56.44px;font-size:13px;line-height:20px;color:#242424;font-family:"Liberation Sans","Noto Sans CJK JP",sans-serif;transform:scaleX(0.9308);'>差し込み文書</span>
<span class="t" style='left:507.11px;top:56.44px;font-size:13px;line-height:20px;color:#242424;font-family:"Liberation Sans","Noto Sans CJK JP",sans-serif;transform:scaleX(1.0382);'>校閲</span>
<span class="t" style='left:551.69px;top:56.44px;font-size:13px;line-height:20px;color:#242424;font-family:"Liberation Sans","Noto Sans CJK JP",sans-serif;'>表示</span>
<span class="t" style='left:596.39px;top:56.66px;font-size:13px;line-height:20px;color:#242424;font-family:"Liberation Sans","Noto Sans CJK JP",sans-serif;transform:scaleX(0.8145);'>ヘルプ</span>
<span class="t" style='left:937.37px;top:54.81px;font-size:13px;line-height:20px;color:#242424;font-family:"Liberation Sans","Noto Sans CJK JP",sans-serif;transform:scaleX(0.7917);'>コメント</span>
<span class="t" style='left:1016.68px;top:54.94px;font-size:13px;line-height:20px;color:#242424;font-family:"Liberation Sans","Noto Sans CJK JP",sans-serif;transform:scaleX(1.0272);'>編集</span>
<span class="t" style='left:1088.41px;top:54.94px;font-size:13px;line-height:20px;color:#fff;font-family:"Liberation Sans","Noto Sans CJK JP",sans-serif;transform:scaleX(1.0532);'>共有</span>
<span class="t" style='left:23.07px;top:121.03px;font-size:12px;line-height:18px;color:#242424;font-family:"Liberation Sans","Noto Sans CJK JP",sans-serif;transform:scaleX(0.8770);'>貼り付け</span>
<span class="t" style='left:19.14px;top:161.06px;font-size:12px;line-height:18px;color:#333;font-family:"Liberation Sans","Noto Sans CJK JP",sans-serif;transform:scaleX(0.7256);'>クリップボード</span>
<span class="t" style='left:221.27px;top:160.75px;font-size:12px;line-height:18px;color:#333;font-family:"Liberation Sans","Noto Sans CJK JP",sans-serif;transform:scaleX(0.7303);'>フォント</span>
<span class="t" style='left:471.12px;top:161.03px;font-size:12px;line-height:18px;color:#333;font-family:"Liberation Sans","Noto Sans CJK JP",sans-serif;transform:scaleX(1.0080);'>段落</span>
<span class="t" style='left:601.06px;top:120.62px;font-size:12px;line-height:18px;color:#242424;font-family:"Liberation Sans","Noto Sans CJK JP",sans-serif;transform:scaleX(0.7892);'>スタイル</span>
<span class="t" style='left:593.13px;top:161.12px;font-size:12px;line-height:18px;color:#333;font-family:"Liberation Sans","Noto Sans CJK JP",sans-serif;transform:scaleX(0.7351);'>スタイル</span>
<span class="t" style='left:664.74px;top:118.09px;font-size:12px;line-height:18px;color:#242424;font-family:"Liberation Sans","Noto Sans CJK JP",sans-serif;transform:scaleX(1.0481);'>編集</span>
<span class="t" style='left:714.26px;top:121.19px;font-size:12px;line-height:18px;color:#242424;font-family:"Liberation Sans","Noto Sans CJK JP",sans-serif;transform:scaleX(0.7438);'>ディクテー</span>
<span class="t" style='left:718.51px;top:135.65px;font-size:12px;line-height:18px;color:#242424;font-family:"Liberation Sans","Noto Sans CJK JP",sans-serif;transform:scaleX(0.7085);'>ション</span>
<span class="t" style='left:725.17px;top:161.06px;font-size:12px;line-height:18px;color:#333;font-family:"Liberation Sans","Noto Sans CJK JP",sans-serif;transform:scaleX(1.0061);'>音声</span>
<span class="t" style='left:789.24px;top:120.54px;font-size:12px;line-height:18px;color:#242424;font-family:"Liberation Sans","Noto Sans CJK JP",sans-serif;transform:scaleX(0.8071);'>アド</span>
<span class="t" style='left:789.61px;top:135.93px;font-size:12px;line-height:18px;color:#242424;font-family:"Liberation Sans","Noto Sans CJK JP",sans-serif;transform:scaleX(0.7864);'>イン</span>
<span class="t" style='left:780.33px;top:160.94px;font-size:12px;line-height:18px;color:#333;font-family:"Liberation Sans","Noto Sans CJK JP",sans-serif;transform:scaleX(0.7442);'>アドイン</span>
<span class="t" style='left:843.18px;top:120.69px;font-size:12px;line-height:18px;color:#242424;font-family:"Liberation Sans","Noto Sans CJK JP",sans-serif;transform:scaleX(0.8170);'>エディ</span>
<span class="t" style='left:847.17px;top:135.62px;font-size:12px;line-height:18px;color:#242424;font-family:"Liberation Sans","Noto Sans CJK JP",sans-serif;transform:scaleX(0.7816);'>ター</span>
<span class="t" style='left:881.77px;top:118.51px;font-size:12.8px;line-height:19px;color:#242424;font-family:"Liberation Sans","Noto Sans CJK JP",sans-serif;'>Copilot</span>
<span class="t" style='left:11.70px;top:869.03px;font-size:12px;line-height:18px;color:#333;font-family:"Liberation Sans","Noto Sans CJK JP",sans-serif;transform:scaleX(0.9641);'>移動先は?</span>
<span class="t" style='left:769.70px;top:868.84px;font-size:12px;line-height:18px;color:#333;font-family:"Liberation Sans","Noto Sans CJK JP",sans-serif;transform:scaleX(0.7702);'>フォーカス</span>
<span class="t" style='left:1091.75px;top:868.62px;font-size:12px;line-height:18px;color:#333;font-family:"Liberation Sans","Noto Sans CJK JP",sans-serif;transform:scaleX(1.0886);'>130%</span>
<span class="t" style='left:144.17px;top:180.50px;font-size:15px;line-height:18px;color:#2a2a2a;font-family:"Liberation Serif",serif;transform:scaleX(1.1111);'>→</span>
<span class="t" style='left:196.19px;top:177.47px;font-size:18.2px;line-height:28px;color:#000;font-family:"Liberation Serif","Noto Serif CJK JP","Noto Serif CJK SC",serif;transform:scaleX(1.0803);'>23:35～25:48</span>
<span class="t" style='left:313.17px;top:180.50px;font-size:15px;line-height:18px;color:#2a2a2a;font-family:"Liberation Serif",serif;transform:scaleX(1.1111);'>→</span>
<span class="t" style='left:339.30px;top:178.04px;font-size:18.2px;line-height:28px;color:#000;font-family:"Liberation Serif","Noto Serif CJK JP","Noto Serif CJK SC",serif;'>グアム着。着後、現地係員がホテルへ送迎。</span>
<span class="t" style='left:703.21px;top:181.22px;font-size:13px;line-height:20px;color:#858585;font-family:"Noto Sans CJK JP","DejaVu Sans",sans-serif;transform:scaleX(1.2598);'>↵</span>
<span class="t" style='left:144.17px;top:212.30px;font-size:15px;line-height:18px;color:#2a2a2a;font-family:"Liberation Serif",serif;transform:scaleX(1.1111);'>→</span>
<span class="t" style='left:259.67px;top:212.30px;font-size:15px;line-height:18px;color:#2a2a2a;font-family:"Liberation Serif",serif;transform:scaleX(1.1111);'>→</span>
<span class="t" style='left:339.30px;top:209.84px;font-size:18.2px;line-height:28px;color:#000;font-family:"Liberation Serif","Noto Serif CJK JP","Noto Serif CJK SC",serif;'>着後、ホテルへ</span>
<span class="t" style='left:466.51px;top:213.02px;font-size:13px;line-height:20px;color:#858585;font-family:"Noto Sans CJK JP","DejaVu Sans",sans-serif;transform:scaleX(1.2598);'>↵</span>
<span class="t" style='left:110.80px;top:240.77px;font-size:18.2px;line-height:28px;color:#000;font-family:"Liberation Serif","Noto Serif CJK JP","Noto Serif CJK SC",serif;transform:scaleX(1.2373);'>2</span>
<span class="t" style='left:124.50px;top:241.34px;font-size:18.2px;line-height:28px;color:#000;font-family:"Liberation Serif","Noto Serif CJK JP","Noto Serif CJK SC",serif;'>日目</span>
<span class="t" style='left:169.17px;top:243.80px;font-size:15px;line-height:18px;color:#2a2a2a;font-family:"Liberation Serif",serif;transform:scaleX(1.1111);'>→</span>
<span class="t" style='left:259.67px;top:243.80px;font-size:15px;line-height:18px;color:#2a2a2a;font-family:"Liberation Serif",serif;transform:scaleX(1.1111);'>→</span>
<span class="t" style='left:339.30px;top:241.34px;font-size:18.2px;line-height:28px;color:#000;font-family:"Liberation Serif","Noto Serif CJK JP","Noto Serif CJK SC",serif;'>終日自由行動</span>
<span class="t" style='left:448.21px;top:244.52px;font-size:13px;line-height:20px;color:#858585;font-family:"Noto Sans CJK JP","DejaVu Sans",sans-serif;transform:scaleX(1.2598);'>↵</span>
<span class="t" style='left:110.44px;top:271.97px;font-size:18.2px;line-height:28px;color:#000;font-family:"Liberation Serif","Noto Serif CJK JP","Noto Serif CJK SC",serif;transform:scaleX(1.2373);'>3</span>
<span class="t" style='left:124.50px;top:272.54px;font-size:18.2px;line-height:28px;color:#000;font-family:"Liberation Serif","Noto Serif CJK JP","Noto Serif CJK SC",serif;'>日目</span>
<span class="t" style='left:169.17px;top:275.00px;font-size:15px;line-height:18px;color:#2a2a2a;font-family:"Liberation Serif",serif;transform:scaleX(1.1111);'>→</span>
<span class="t" style='left:259.67px;top:275.00px;font-size:15px;line-height:18px;color:#2a2a2a;font-family:"Liberation Serif",serif;transform:scaleX(1.1111);'>→</span>
<span class="t" style='left:339.30px;top:272.54px;font-size:18.2px;line-height:28px;color:#000;font-family:"Liberation Serif","Noto Serif CJK JP","Noto Serif CJK SC",serif;'>現地係員が空港へご案内</span>
<span class="t" style='left:539.21px;top:275.72px;font-size:13px;line-height:20px;color:#858585;font-family:"Noto Sans CJK JP","DejaVu Sans",sans-serif;transform:scaleX(1.2598);'>↵</span>
<span class="t" style='left:144.17px;top:306.50px;font-size:15px;line-height:18px;color:#2a2a2a;font-family:"Liberation Serif",serif;transform:scaleX(1.1111);'>→</span>
<span class="t" style='left:195.77px;top:303.47px;font-size:18.2px;line-height:28px;color:#000;font-family:"Liberation Serif","Noto Serif CJK JP","Noto Serif CJK SC",serif;transform:scaleX(1.0852);'>7:07～10:30</span>
<span class="t" style='left:308.17px;top:306.50px;font-size:15px;line-height:18px;color:#2a2a2a;font-family:"Liberation Serif",serif;transform:scaleX(1.1111);'>→</span>
<span class="t" style='left:339.30px;top:304.04px;font-size:18.2px;line-height:28px;color:#000;font-family:"Liberation Serif","Noto Serif CJK JP","Noto Serif CJK SC",serif;'>グアム空港発</span>
<span class="t" style='left:448.21px;top:307.22px;font-size:13px;line-height:20px;color:#858585;font-family:"Noto Sans CJK JP","DejaVu Sans",sans-serif;transform:scaleX(1.2598);'>↵</span>
<span class="t" style='left:144.17px;top:337.70px;font-size:15px;line-height:18px;color:#2a2a2a;font-family:"Liberation Serif",serif;transform:scaleX(1.1111);'>→</span>
<span class="t" style='left:196.39px;top:334.67px;font-size:18.2px;line-height:28px;color:#000;font-family:"Liberation Serif","Noto Serif CJK JP","Noto Serif CJK SC",serif;transform:scaleX(1.0784);'>9:50～13:30</span>
<span class="t" style='left:308.17px;top:337.70px;font-size:15px;line-height:18px;color:#2a2a2a;font-family:"Liberation Serif",serif;transform:scaleX(1.1111);'>→</span>
<span class="t" style='left:339.30px;top:335.24px;font-size:18.2px;line-height:28px;color:#000;font-family:"Liberation Serif","Noto Serif CJK JP","Noto Serif CJK SC",serif;'>成田空港着、現地解散</span>
<span class="t" style='left:521.21px;top:338.42px;font-size:13px;line-height:20px;color:#858585;font-family:"Noto Sans CJK JP","DejaVu Sans",sans-serif;transform:scaleX(1.2598);'>↵</span>
<span class="t" style='left:109.21px;top:369.72px;font-size:13px;line-height:20px;color:#858585;font-family:"Noto Sans CJK JP","DejaVu Sans",sans-serif;transform:scaleX(1.2598);'>↵</span>
<span class="t" style='left:119.30px;top:407.47px;font-size:20.8px;line-height:30px;color:#4F81BD;font-family:"Liberation Sans","Noto Sans CJK JP",sans-serif;font-weight:700;'>料金表</span>
<span class="t" style='left:181.08px;top:410.81px;font-size:16px;line-height:20px;color:#858585;font-family:"Noto Sans CJK JP","DejaVu Sans",sans-serif;transform:scaleX(1.2308);'>↵</span>
<span class="t" style='left:128.00px;top:450.01px;font-size:18.2px;line-height:28px;color:#fff;font-family:"Liberation Serif","Noto Serif CJK JP","Noto Serif CJK SC",serif;font-weight:700;transform:scaleX(1.1161);'>A</span>
<span class="t" style='left:141.09px;top:455.02px;font-size:13.5px;line-height:16px;color:#b4bccb;font-family:"Noto Sans CJK JP","DejaVu Sans",sans-serif;transform:scaleX(0.7164);'>←</span>
<span class="t" style='left:160.06px;top:448.17px;font-size:18.2px;line-height:28px;color:#000;font-family:"Liberation Serif","Noto Serif CJK JP","Noto Serif CJK SC",serif;transform:scaleX(1.1043);'>33,700</span>
<span class="t" style='left:219.50px;top:450.24px;font-size:18.2px;line-height:28px;color:#000;font-family:"Liberation Serif","Noto Serif CJK JP","Noto Serif CJK SC",serif;'>円</span>
<span class="t" style='left:238.89px;top:454.52px;font-size:13.5px;line-height:16px;color:#858585;font-family:"Noto Sans CJK JP","DejaVu Sans",sans-serif;transform:scaleX(0.7164);'>←</span>
<span class="t" style='left:257.56px;top:448.17px;font-size:18.2px;line-height:28px;color:#000;font-family:"Liberation Serif","Noto Serif CJK JP","Noto Serif CJK SC",serif;transform:scaleX(1.1076);'>5/22~24, 5/27~31</span>
<span class="t" style='left:402.02px;top:454.52px;font-size:13.5px;line-height:16px;color:#858585;font-family:"Noto Sans CJK JP","DejaVu Sans",sans-serif;transform:scaleX(0.6368);'>←</span>
<span class="t" style='left:411.65px;top:454.52px;font-size:13.5px;line-height:16px;color:#858585;font-family:"Noto Sans CJK JP","DejaVu Sans",sans-serif;transform:scaleX(0.7960);'>←</span>
<span class="t" style='left:127.67px;top:481.33px;font-size:18.2px;line-height:28px;color:#fff;font-family:"Liberation Serif","Noto Serif CJK JP","Noto Serif CJK SC",serif;font-weight:700;transform:scaleX(1.1429);'>B</span>
<span class="t" style='left:141.09px;top:486.62px;font-size:13.5px;line-height:16px;color:#b4bccb;font-family:"Noto Sans CJK JP","DejaVu Sans",sans-serif;transform:scaleX(0.7164);'>←</span>
<span class="t" style='left:160.06px;top:479.77px;font-size:18.2px;line-height:28px;color:#000;font-family:"Liberation Serif","Noto Serif CJK JP","Noto Serif CJK SC",serif;transform:scaleX(1.1043);'>37,700</span>
<span class="t" style='left:219.50px;top:481.84px;font-size:18.2px;line-height:28px;color:#000;font-family:"Liberation Serif","Noto Serif CJK JP","Noto Serif CJK SC",serif;'>円</span>
<span class="t" style='left:238.89px;top:486.12px;font-size:13.5px;line-height:16px;color:#858585;font-family:"Noto Sans CJK JP","DejaVu Sans",sans-serif;transform:scaleX(0.7164);'>←</span>
<span class="t" style='left:257.57px;top:479.77px;font-size:18.2px;line-height:28px;color:#000;font-family:"Liberation Serif","Noto Serif CJK JP","Noto Serif CJK SC",serif;transform:scaleX(1.0891);'>5/26</span>
<span class="t" style='left:292.51px;top:485.02px;font-size:13px;line-height:20px;color:#858585;font-family:"Noto Sans CJK JP","DejaVu Sans",sans-serif;transform:scaleX(1.2598);'>↵</span>
<span class="t" style='left:411.65px;top:486.12px;font-size:13.5px;line-height:16px;color:#858585;font-family:"Noto Sans CJK JP","DejaVu Sans",sans-serif;transform:scaleX(0.7960);'>←</span>
<span class="t" style='left:127.00px;top:512.67px;font-size:18.2px;line-height:28px;color:#fff;font-family:"Liberation Serif","Noto Serif CJK JP","Noto Serif CJK SC",serif;font-weight:700;transform:scaleX(1.1722);'>C</span>
<span class="t" style='left:141.09px;top:517.83px;font-size:13.5px;line-height:16px;color:#b4bccb;font-family:"Noto Sans CJK JP","DejaVu Sans",sans-serif;transform:scaleX(0.7164);'>←</span>
<span class="t" style='left:160.69px;top:510.97px;font-size:18.2px;line-height:28px;color:#000;font-family:"Liberation Serif","Noto Serif CJK JP","Noto Serif CJK SC",serif;transform:scaleX(1.0915);'>45,700</span>
<span class="t" style='left:219.50px;top:513.04px;font-size:18.2px;line-height:28px;color:#000;font-family:"Liberation Serif","Noto Serif CJK JP","Noto Serif CJK SC",serif;'>円</span>
<span class="t" style='left:238.89px;top:517.33px;font-size:13.5px;line-height:16px;color:#858585;font-family:"Noto Sans CJK JP","DejaVu Sans",sans-serif;transform:scaleX(0.7164);'>←</span>
<span class="t" style='left:257.56px;top:510.97px;font-size:18.2px;line-height:28px;color:#000;font-family:"Liberation Serif","Noto Serif CJK JP","Noto Serif CJK SC",serif;transform:scaleX(1.0991);'>5/25</span>
<span class="t" style='left:292.51px;top:516.22px;font-size:13px;line-height:20px;color:#858585;font-family:"Noto Sans CJK JP","DejaVu Sans",sans-serif;transform:scaleX(1.2598);'>↵</span>
<span class="t" style='left:411.65px;top:517.33px;font-size:13.5px;line-height:16px;color:#858585;font-family:"Noto Sans CJK JP","DejaVu Sans",sans-serif;transform:scaleX(0.7960);'>←</span>
<span class="t" style='left:118.21px;top:549.22px;font-size:13px;line-height:20px;color:#858585;font-family:"Noto Sans CJK JP","DejaVu Sans",sans-serif;transform:scaleX(1.2598);'>↵</span>
<span class="t" style='left:118.21px;top:579.72px;font-size:13px;line-height:20px;color:#858585;font-family:"Noto Sans CJK JP","DejaVu Sans",sans-serif;transform:scaleX(1.2598);'>↵</span>
<span class="t" style='left:159.96px;top:575.92px;font-size:12px;line-height:18px;color:#222;font-family:"Liberation Sans","Noto Sans CJK JP",sans-serif;transform:scaleX(0.9548);'>Copilot による貼り付け (Ctrl)</span>
<span class="t" style='left:574.85px;top:399.88px;font-size:12px;line-height:20px;color:#858585;font-family:"Noto Sans CJK JP","DejaVu Sans",sans-serif;transform:scaleX(1.1624);'>↵</span>
<span class="t" style='left:1018.65px;top:403.43px;font-size:13.5px;line-height:16px;color:#858585;font-family:"Noto Sans CJK JP","DejaVu Sans",sans-serif;transform:scaleX(0.7960);'>←</span>
<span class="t" style='left:109.21px;top:611.42px;font-size:13px;line-height:20px;color:#858585;font-family:"Noto Sans CJK JP","DejaVu Sans",sans-serif;transform:scaleX(1.2598);'>↵</span>
<span class="t" style='left:110.30px;top:648.47px;font-size:20.8px;line-height:30px;color:#3F6596;font-family:"Liberation Sans","Noto Sans CJK JP",sans-serif;font-weight:700;'>料金のほかにお支払いいただくもの</span>
<span class="t" style='left:444.58px;top:652.31px;font-size:16px;line-height:20px;color:#7a7a7a;font-family:"Noto Sans CJK JP","DejaVu Sans",sans-serif;transform:scaleX(1.2308);'>↵</span>
<span class="t" style='left:120.17px;top:692.80px;font-size:15px;line-height:18px;color:#2a2a2a;font-family:"Liberation Serif",serif;transform:scaleX(1.1111);'>→</span>
<span class="t" style='left:135.00px;top:690.34px;font-size:18.2px;line-height:28px;color:#000;font-family:"Liberation Serif","Noto Serif CJK JP","Noto Serif CJK SC",serif;'>現地空港税</span>
<span class="t" style='left:225.56px;top:693.52px;font-size:13px;line-height:20px;color:#7a7a7a;font-family:"Noto Sans CJK JP","DejaVu Sans",sans-serif;transform:scaleX(1.2598);'>↵</span>
<span class="t" style='left:120.17px;top:724.30px;font-size:15px;line-height:18px;color:#2a2a2a;font-family:"Liberation Serif",serif;transform:scaleX(1.1111);'>→</span>
<span class="t" style='left:135.00px;top:721.84px;font-size:18.2px;line-height:28px;color:#000;font-family:"Liberation Serif","Noto Serif CJK JP","Noto Serif CJK SC",serif;'>燃料サーチャージ</span>
<span class="t" style='left:280.07px;top:725.02px;font-size:13px;line-height:20px;color:#7a7a7a;font-family:"Noto Sans CJK JP","DejaVu Sans",sans-serif;transform:scaleX(1.2598);'>↵</span>
<span class="t" style='left:120.17px;top:755.80px;font-size:15px;line-height:18px;color:#2a2a2a;font-family:"Liberation Serif",serif;transform:scaleX(1.1111);'>→</span>
<span class="t" style='left:135.00px;top:753.34px;font-size:18.2px;line-height:28px;color:#000;font-family:"Liberation Serif","Noto Serif CJK JP","Noto Serif CJK SC",serif;'>空港使用料・旅客保安サービス料</span>
<span class="t" style='left:407.26px;top:756.52px;font-size:13px;line-height:20px;color:#7a7a7a;font-family:"Noto Sans CJK JP","DejaVu Sans",sans-serif;transform:scaleX(1.2598);'>↵</span>
<span class="t" style='left:110.30px;top:794.47px;font-size:20.8px;line-height:30px;color:#4F81BD;font-family:"Liberation Sans","Noto Sans CJK JP",sans-serif;font-weight:700;'>カレンダー</span>
<span class="t" style='left:214.08px;top:797.81px;font-size:16px;line-height:20px;color:#858585;font-family:"Noto Sans CJK JP","DejaVu Sans",sans-serif;transform:scaleX(1.2308);'>↵</span>
<span class="t" style='left:109.21px;top:840.72px;font-size:13px;line-height:20px;color:#858585;font-family:"Noto Sans CJK JP","DejaVu Sans",sans-serif;transform:scaleX(1.2598);'>↵</span>
<span class="t" style='left:342.07px;top:86.12px;font-size:7.5px;line-height:10px;color:#444;font-family:"Liberation Sans","Noto Sans CJK JP",sans-serif;transform:scaleX(1.0612);'>ア</span>
<span class="t" style='left:341.61px;top:94.66px;font-size:8.5px;line-height:10px;color:#444;font-family:"Liberation Sans","Noto Sans CJK JP",sans-serif;transform:scaleX(1.0323);'>亜</span>
<span class="t" style='left:367.50px;top:86.72px;font-size:12.7px;line-height:18px;color:#3a3a3a;font-family:"Liberation Sans","Noto Sans CJK JP",sans-serif;transform:scaleX(1.0588);'>A</span>
<span class="t" style='left:118.01px;top:111.63px;font-size:13.1px;line-height:18px;color:#3a3a3a;font-family:"Liberation Sans","Noto Sans CJK JP",sans-serif;font-weight:700;transform:scaleX(0.9000);'>B</span>
<span class="t" style='left:145.08px;top:109.72px;font-size:14px;line-height:21px;color:#3a3a3a;font-family:"Liberation Serif",serif;font-style:italic;transform:scaleX(1.2235);'>I</span>
<span class="t" style='left:168.56px;top:111.99px;font-size:12.3px;line-height:17px;color:#3a3a3a;font-family:"Liberation Sans","Noto Sans CJK JP",sans-serif;transform:scaleX(1.1143);'>U</span>
<span class="t" style='left:208.02px;top:112.06px;font-size:13px;line-height:18px;color:#555;font-family:"Liberation Sans","Noto Sans CJK JP",sans-serif;transform:scaleX(0.9689);'>ab</span>
<span class="t" style='left:237.54px;top:110.32px;font-size:14px;line-height:18px;color:#3a3a3a;font-family:"Liberation Sans","Noto Sans CJK JP",sans-serif;font-weight:700;'>x</span>
<span class="t" style='left:244.79px;top:122.34px;font-size:7px;line-height:9px;color:#2B88D8;font-family:"Liberation Sans","Noto Sans CJK JP",sans-serif;font-weight:700;transform:scaleX(1.1055);'>2</span>
<span class="t" style='left:263.54px;top:110.32px;font-size:14px;line-height:18px;color:#3a3a3a;font-family:"Liberation Sans","Noto Sans CJK JP",sans-serif;font-weight:700;'>x</span>
<span class="t" style='left:270.59px;top:111.14px;font-size:7px;line-height:9px;color:#2B88D8;font-family:"Liberation Sans","Noto Sans CJK JP",sans-serif;font-weight:700;transform:scaleX(1.1055);'>2</span>
<span class="t" style='left:288.40px;top:107.68px;font-size:17.3px;line-height:24px;color:#444;font-family:"Liberation Sans","Noto Sans CJK JP",sans-serif;transform:scaleX(0.8604);'>A</span>
<span class="t" style='left:114.68px;top:133.36px;font-size:19.5px;line-height:26px;color:#EAF2FB;font-family:"Liberation Sans","Noto Sans CJK JP",sans-serif;font-weight:700;transform:scaleX(1.0592);-webkit-text-stroke:1.500px #1F6FC5;'>A</span>
<span class="t" style='left:200.60px;top:135.22px;font-size:13.7px;line-height:19px;color:#3a3a3a;font-family:"Liberation Sans","Noto Sans CJK JP",sans-serif;transform:scaleX(1.0959);'>A</span>
<span class="t" style='left:238.40px;top:139.45px;font-size:12.5px;line-height:17px;color:#3a3a3a;font-family:"Liberation Sans","Noto Sans CJK JP",sans-serif;transform:scaleX(1.0432);letter-spacing:0.600px;'>Aa</span>
<span class="t" style='left:283.60px;top:133.49px;font-size:17.6px;line-height:25px;color:#3a3a3a;font-family:"Liberation Sans","Noto Sans CJK JP",sans-serif;transform:scaleX(0.9894);'>A</span>
<span class="t" style='left:311.50px;top:137.39px;font-size:13.4px;line-height:19px;color:#3a3a3a;font-family:"Liberation Sans","Noto Sans CJK JP",sans-serif;transform:scaleX(1.0629);'>A</span>
<span class="t" style='left:341.70px;top:139.43px;font-size:12.4px;line-height:17px;color:#3a3a3a;font-family:"Liberation Sans","Noto Sans CJK JP",sans-serif;transform:scaleX(1.0424);'>A</span>
<span class="t" style='left:366.21px;top:141.64px;font-size:10px;line-height:12px;color:#333;font-family:"Liberation Sans","Noto Sans CJK JP",sans-serif;transform:scaleX(1.1511);'>字</span>
<span class="t" style='left:444.61px;top:84.70px;font-size:6.5px;line-height:8px;color:#2B88D8;font-family:"Liberation Sans","Noto Sans CJK JP",sans-serif;font-weight:700;transform:scaleX(1.0449);'>1</span>
<span class="t" style='left:444.81px;top:90.78px;font-size:6.5px;line-height:8px;color:#2B88D8;font-family:"Liberation Sans","Noto Sans CJK JP",sans-serif;font-weight:700;'>2</span>
<span class="t" style='left:444.88px;top:96.80px;font-size:6.5px;line-height:8px;color:#2B88D8;font-family:"Liberation Sans","Noto Sans CJK JP",sans-serif;font-weight:700;transform:scaleX(0.9660);'>3</span>
<span class="t" style='left:485.81px;top:84.70px;font-size:6.5px;line-height:8px;color:#2B88D8;font-family:"Liberation Sans","Noto Sans CJK JP",sans-serif;font-weight:700;transform:scaleX(1.0449);'>1</span>
<span class="t" style='left:488.81px;top:89.52px;font-size:6.5px;line-height:8px;color:#2B88D8;font-family:"Liberation Sans","Noto Sans CJK JP",sans-serif;font-weight:700;transform:scaleX(1.0286);'>a</span>
<span class="t" style='left:492.96px;top:96.54px;font-size:6.5px;line-height:8px;color:#2B88D8;font-family:"Liberation Sans","Noto Sans CJK JP",sans-serif;font-weight:700;transform:scaleX(1.9200);'>i</span>
<span class="t" style='left:534.00px;top:138.09px;font-size:9px;line-height:10px;color:#2B88D8;font-family:"Liberation Sans","Noto Sans CJK JP",sans-serif;font-weight:700;transform:scaleX(1.0776);'>A</span>
<span class="t" style='left:534.30px;top:146.53px;font-size:9px;line-height:10px;color:#3a3a3a;font-family:"Liberation Sans","Noto Sans CJK JP",sans-serif;transform:scaleX(1.2000);'>Z</span>
<span class="t" style='left:605.60px;top:82.25px;font-size:32px;line-height:40px;color:#3a3a3a;font-family:"Liberation Sans","Noto Sans CJK JP",sans-serif;transform:scaleX(0.8651);-webkit-text-stroke:0.700px #fff;'>A</span>
</div></body></html>
